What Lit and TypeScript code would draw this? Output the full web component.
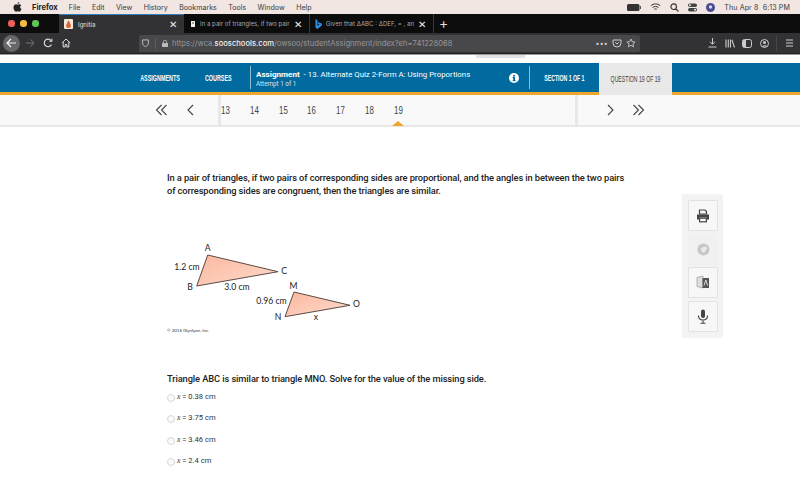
import { LitElement, html, css, svg } from "lit";
import { customElement } from "lit/decorators.js";

const chevL = (n: number) => svg`<svg class="chev" width="14" height="12" viewBox="0 0 14 12" fill="none" stroke="#444" stroke-width="1.1">${n === 2 ? svg`<path d="M6.5 1 1.5 6l5 5M11.5 1 6.5 6l5 5"/>` : svg`<path d="M9 1 4 6l5 5"/>`}</svg>`;
const chevR = (n: number) => svg`<svg class="chev" width="14" height="12" viewBox="0 0 14 12" fill="none" stroke="#444" stroke-width="1.1">${n === 2 ? svg`<path d="M2.5 1l5 5-5 5M7.5 1l5 5-5 5"/>` : svg`<path d="M5 1l5 5-5 5"/>`}</svg>`;

@customElement("app-root")
export class AppRoot extends LitElement {
  static styles = css`
    :host { display: block; width: 800px; height: 500px; overflow: hidden; background: #fff; font-family: "Roboto", "Liberation Sans", sans-serif; color: #222; }
    .menubar { height: 14px; background: #f2e6e3; display: flex; align-items: center; padding: 0 10px 0 13px; font: 7.1px "Inter", "Liberation Sans", sans-serif; color: #3a3a3a; }
    .menubar .apple { width: 9px; height: 10px; margin-right: 10px; }
    .menubar b { margin-right: 11px; font-weight: 700; color: #222; font-size: 7.6px; }
    .menubar .mi { margin-right: 11.4px; }
    .menubar .right { margin-left: auto; display: flex; align-items: center; gap: 9px; }
    .menubar .clock { margin-left: 0; letter-spacing: .1px; }
    .tabs { height: 19px; background: #0c0c0d; display: flex; align-items: stretch; color: #a8a8ab; font: 6.1px "Inter", "Liberation Sans", sans-serif; }
    .lights { width: 59px; display: flex; gap: 5.5px; align-items: center; padding-left: 8px; box-sizing: border-box; }
    .lights i { width: 6.5px; height: 6.5px; border-radius: 50%; }
    .tab { display: flex; align-items: center; box-sizing: border-box; padding: 0 7px 0 5px; gap: 5px; }
    .tab.active { width: 125px; background: #323234; border-top: 1.5px solid #2f7fc0; color: #e0e0e0; }
    .tab.t2 { width: 126px; border-right: 1px solid #38383a; padding-left: 6px; gap: 4px; }
    .tab.t3 { width: 124px; border-right: 1px solid #38383a; padding-left: 5px; gap: 4px; }
    .tab .label { flex: 1; white-space: nowrap; }
    .tab .x { font-size: 10px; color: #eee; line-height: 1; }
    .plus { margin-left: 5px; font-size: 14px; color: #ddd; line-height: 17px; }
    .toolbar { height: 21px; background: #323234; display: flex; align-items: center; color: #c8c8ca; box-sizing: border-box; border-bottom: 1px solid #222; }
    .back { width: 17px; height: 17px; border-radius: 50%; background: #67676a; margin-left: 3px; display: flex; align-items: center; justify-content: center; }
    .nav-ic { display: flex; gap: 8px; align-items: center; margin-left: 5px; }
    .url { margin-left: 68px; width: 501px; height: 17px; background: #48484b; border-radius: 2px; display: flex; align-items: center; padding: 0 4px 0 3px; box-sizing: border-box; font: 7.6px "Inter", "Liberation Sans", sans-serif; color: #97979a; gap: 4px; white-space: nowrap; }
    .url b { color: #f0f0f0; font-weight: 500; }
    .url .path { flex: 1; overflow: hidden; }
    .tools { margin-left: 68px; display: flex; gap: 7.6px; align-items: center; }
    .sep { width: 1px; height: 15px; background: #47474a; }
    .stub-row { height: 9px; background: #fff; border-top: 1px solid #999; box-sizing: border-box; padding-left: 476px; }
    .stub { width: 49px; height: 3px; background: #e2e2e2; }
    .band { background: #016a9f; border-bottom: 3px solid #eca62e; display: flex; align-items: stretch; height: 29px; color: #fff; }
    .cond { font-family: "Liberation Sans", sans-serif; font-weight: 700; text-transform: uppercase; white-space: nowrap; }
    .cond > span { display: inline-block; transform: scaleX(.6); }
    .band .cell { display: flex; align-items: center; justify-content: center; }
    .a1 { margin-left: 128px; width: 64px; font-size: 9px; }
    .a2 { width: 58px; font-size: 9px; padding-right: 5px; box-sizing: border-box; }
    .divider { width: 1px; background: #8fbbd3; margin: 3px 0; }
    .assign { width: 252px; padding: 2px 0 0 5px; box-sizing: content-box; display: flex; flex-direction: column; justify-content: center; gap: 1.5px; }
    .assign .l1 { font-size: 7.85px; white-space: nowrap; }
    .assign .l1 b { font-weight: 700; font-size: 8.1px; }
    .assign .l2 { font-size: 6.3px; color: #d8e8f0; }
    .info { width: 10px; height: 10px; align-self: center; margin: 0 10px 0 1px; }
    .sec { width: 69px; font-size: 8.6px; }
    .band .qn { width: 73px; font-size: 8.6px; background: #e8e8e8; color: #444; margin-bottom: -3px; font-weight: 400; }
    .numbar { height: 30px; background: #f9f9f9; border-bottom: 2px solid #e8e8e8; display: flex; align-items: center; }
    .left { width: 218px; display: flex; justify-content: flex-end; gap: 15px; padding-right: 20px; box-sizing: border-box; }
    .nb { width: 3px; align-self: stretch; background: #e8e8e8; flex: none; }
    .nums { width: 354px; display: flex; font-size: 11px; color: #444; position: relative; align-self: stretch; align-items: center; }
    .nums .n { width: 28.8px; text-align: center; font-weight: 400; flex: none; transform: scaleX(.72); }
    .nums .n:first-child { margin-left: -10px; }
    .caret { position: absolute; left: 171px; bottom: -1px; width: 0; height: 0; border-left: 6px solid transparent; border-right: 6px solid transparent; border-bottom: 5px solid #eca62e; }
    .rgt { display: flex; gap: 14px; padding-left: 25px; }
    .main { display: flex; padding-left: 167px; }
    .content { width: 515px; padding-top: 44px; }
    .q { font-size: 9.3px; letter-spacing: -0.1px; line-height: 13.4px; font-weight: 500; color: #222; width: 466px; }
    .fig { display: block; margin-top: 43px; margin-left: -7px; }
    .stem { font-size: 9.3px; letter-spacing: -0.1px; font-weight: 500; margin-top: 36px; line-height: 13px; color: #222; }
    .opts { margin-top: 1px; display: flex; flex-direction: column; }
    .opt { height: 21.3px; display: flex; align-items: center; font-size: 7.6px; color: #333; gap: 2px; }
    .radio { width: 6px; height: 6px; border: 1px solid #d8d8d8; border-radius: 50%; background: #fafafa; margin-top: 3px; }
    .opt i { font-family: "Liberation Serif", serif; }
    .side { margin-top: 67px; width: 41px; height: 144px; background: #f3f3f3; padding: 6px; box-sizing: border-box; border-radius: 2px; display: flex; flex-direction: column; gap: 2.5px; }
    .btn { width: 30px; height: 31px; box-sizing: border-box; border: 1px solid #e2e2e2; background: #f7f7f7; display: flex; align-items: center; justify-content: center; border-radius: 1px; flex: none; }
    .btn.off { background: #f1f1f1; border-color: #f0f0f0; }
    .lbl { font: 8.6px "Lato", "Liberation Sans", sans-serif; fill: #222; text-anchor: middle; dominant-baseline: middle; }
    .copy { font: 4.4px "Lato", "Liberation Sans", sans-serif; fill: #333; }
  `;

  render() {
    return html`
      <div class="menubar">
        <svg class="apple" viewBox="0 0 20 22"><path fill="#222" d="M14 0c.2 2-1.700 4.300-4 4.200C9.800 2.200 11.800.2 14 0zM10 5.800c1.300 0 2.300-.9 4.200-.9 1.600 0 3.100.8 4 2.200-3.500 2.100-2.900 6.800.8 8.300-.9 2.300-3 6-5 6-1.500 0-2-1-3.700-1s-2.300 1-3.700 1C4 21.400 1 16 1 12c0-4 2.600-7 5.700-7 1.500 0 2.500.8 3.300.8z"/></svg>
        <b>Firefox</b><span class="mi">File</span><span class="mi">Edit</span><span class="mi">View</span><span class="mi">History</span><span class="mi">Bookmarks</span><span class="mi">Tools</span><span class="mi">Window</span><span class="mi">Help</span>
        <div class="right">
          <svg width="14" height="7" viewBox="0 0 14 7"><rect width="12.500" height="7" rx="1.500" fill="#333"/><rect x="13" y="2" width="1" height="3" fill="#555"/></svg>
          <svg width="11" height="8" viewBox="0 0 11 8" fill="none" stroke="#333" stroke-width="1"><path d="M.8 2.800c2.700-2.500 6.700-2.500 9.400 0M2.500 4.600c1.800-1.500 4.200-1.500 6 0M4.200 6.300c.8-.6 1.800-.6 2.600 0"/></svg>
          <svg width="9" height="9" viewBox="0 0 9 9" fill="none" stroke="#333" stroke-width="1.100"><circle cx="3.700" cy="3.700" r="2.800"/><path d="M5.800 5.800 8.500 8.500"/></svg>
          <svg width="9" height="9" viewBox="0 0 9 9"><rect y="0.500" width="9" height="3.500" rx="1.700" fill="#444"/><rect y="5" width="9" height="3.500" rx="1.700" fill="#444"/><circle cx="2" cy="2.200" r="1" fill="#eee"/><circle cx="7" cy="6.800" r="1" fill="#eee"/></svg>
          <svg width="9" height="9" viewBox="0 0 9 9"><circle cx="4.500" cy="4.500" r="4.500" fill="#4a4a90"/><circle cx="4.500" cy="4" r="1.700" fill="#d8d8f0"/></svg>
          <span class="clock">Thu Apr 8&nbsp; 6:13 PM</span>
        </div>
      </div>

      <div class="tabs">
        <div class="lights"><i style="background:#ec5f57"></i><i style="background:#f4bd3f"></i><i style="background:#5fc553"></i></div>
        <div class="tab active">
          <svg width="9" height="10" viewBox="0 0 9 10"><rect width="9" height="10" rx="1" fill="#f3ead9"/><path d="M4.500 1 7 6.500a2.500 2.500 0 0 1-5 0z" fill="#d8663a"/></svg>
          <span class="label">Ignitia</span><span class="x">✕</span>
        </div>
        <div class="tab t2">
          <svg width="6" height="6" viewBox="0 0 6 6"><path d="M1 0h4v6H1z" fill="#eee"/><path d="M2 2h2" stroke="#111" stroke-width=".7"/></svg>
          <span class="label">In a pair of triangles, if two pair</span><span class="x">✕</span>
        </div>
        <div class="tab t3">
          <svg width="7" height="10" viewBox="0 0 7 10"><path d="M.5 0 2.500.8v6l2.200-1.200-1.300-.7-.8-2L7 4.500v2.100L2.500 10 .5 8.600z" fill="#2f8fe0"/></svg>
          <span class="label">Given that ΔABC : ΔDEF, = , an</span><span class="x">✕</span>
        </div>
        <span class="plus">+</span>
      </div>

      <div class="toolbar">
        <div class="back"><svg width="11" height="10" viewBox="0 0 11 10" fill="none" stroke="#eee" stroke-width="1.200"><path d="M10 5H1.500M5 1 1 5l4 4"/></svg></div>
        <div class="nav-ic">
          <svg width="10" height="10" viewBox="0 0 11 10" fill="none" stroke="#77777a" stroke-width="1.100"><path d="M1 5h8.500M6 1l4 4-4 4"/></svg>
          <svg width="10" height="10" viewBox="0 0 10 10" fill="none" stroke="#ddd" stroke-width="1.100"><path d="M8.500 6.500A3.800 3.800 0 1 1 8 2.500M8.800.8v2.500H6.300"/></svg>
          <svg width="10" height="10" viewBox="0 0 10 10" fill="none" stroke="#ddd" stroke-width="1"><path d="M.8 5 5 1l4.200 4M2.200 4.200V9h2V6.500h1.600V9h2V4.200"/></svg>
        </div>
        <div class="url">
          <svg width="7" height="8" viewBox="0 0 7 8" fill="none" stroke="#bbb" stroke-width="1"><path d="M.6.900h5.800v3C6.400 6 5 7 3.500 7.500 2 7 .6 6 .6 3.900z"/></svg>
          <span style="width:1px;height:11px;background:#5f5f62;margin:0 2px"></span>
          <svg width="6" height="7" viewBox="0 0 6 7"><rect y="3" width="6" height="4" rx=".5" fill="#bbb"/><path d="M1.300 3V2a1.700 1.700 0 0 1 3.400 0v1" fill="none" stroke="#bbb" stroke-width=".8"/></svg>
          <span class="path">https://wca.<b>sooschools.com</b>/owsoo/studentAssignment/index?eh=741228068</span>
          <span style="font-size:7px;color:#ccc;letter-spacing:.2px">•••</span>
          <svg width="10" height="9" viewBox="0 0 10 9" fill="none" stroke="#ccc" stroke-width="1"><path d="M1 1h8v3a4 4 0 0 1-8 0z"/><path d="M3.200 3.400 5 5l1.800-1.600"/></svg>
          <svg width="10" height="10" viewBox="0 0 10 10" fill="none" stroke="#ccc" stroke-width=".9"><path d="M5 1l1.200 2.700 2.900.3-2.200 1.900.7 2.900L5 7.300 2.400 8.800l.7-2.900L.9 4l2.900-.3z"/></svg>
        </div>
        <div class="tools">
          <svg width="9" height="10" viewBox="0 0 9 10" fill="none" stroke="#ccc" stroke-width="1"><path d="M4.500 0v6M2 3.800l2.500 2.500L7 3.800M.5 9h8"/></svg>
          <svg width="10" height="9" viewBox="0 0 10 9" fill="none" stroke="#ccc" stroke-width="1.100"><path d="M1 .5v8M3.300.5v8M5.500.5v8M7 .8 9.500 8.500"/></svg>
          <svg width="10" height="9" viewBox="0 0 10 9"><rect x=".5" y=".5" width="9" height="8" rx="2" fill="none" stroke="#ccc"/><rect x="1" y="1" width="3" height="7" fill="#ccc"/></svg>
          <svg width="9" height="9" viewBox="0 0 9 9"><circle cx="4.500" cy="4.500" r="4" fill="none" stroke="#ccc"/><circle cx="4.500" cy="3.500" r="1.500" fill="#ccc"/><path d="M1.800 7.500a3 2.200 0 0 1 5.400 0z" fill="#ccc"/></svg>
          <span class="sep"></span>
          <svg width="9" height="8" viewBox="0 0 9 8" stroke="#ccc" stroke-width="1"><path d="M1 1h7M1 4h7M1 7h7"/></svg>
        </div>
      </div>

      <div class="stub-row"><div class="stub"></div></div>

      <div class="band">
        <div class="cell cond a1"><span>Assignments</span></div>
        <div class="cell cond a2"><span>Courses</span></div>
        <div class="divider"></div>
        <div class="assign">
          <div class="l1"><b>Assignment</b> &nbsp;- 13. Alternate Quiz 2-Form A: Using Proportions</div>
          <div class="l2">Attempt 1 of 1</div>
        </div>
        <svg class="info" viewBox="0 0 10 10"><circle cx="5" cy="5" r="5" fill="#fff"/><rect x="4.200" y="4.200" width="1.800" height="3.800" fill="#016a9f"/><rect x="3.500" y="4.200" width="2" height=".8" fill="#016a9f"/><rect x="3.500" y="7.400" width="3.200" height=".8" fill="#016a9f"/><circle cx="5" cy="2.800" r="1" fill="#016a9f"/></svg>
        <div class="divider"></div>
        <div class="cell cond sec"><span>Section 1 of 1</span></div>
        <div class="cell cond qn"><span>Question 19 of 19</span></div>
      </div>

      <div class="numbar">
        <div class="left">${chevL(2)}${chevL(1)}</div>
        <div class="nb"></div>
        <div class="nums cond">
          ${[13, 14, 15, 16, 17, 18, 19].map((n) => html`<div class="n">${n}</div>`)}
          <div class="caret"></div>
        </div>
        <div class="nb"></div>
        <div class="rgt">${chevR(1)}${chevR(2)}</div>
      </div>

      <div class="main">
        <div class="content">
          <div class="q">In a pair of triangles, if two pairs of corresponding sides are proportional, and the angles in between the two pairs of corresponding sides are congruent, then the triangles are similar.</div>
          <svg class="fig" width="220" height="95" viewBox="160 240 220 95">
            <defs><linearGradient id="g" x1="0" y1="0" x2="1" y2="1"><stop offset="0" stop-color="#fbb79e"/><stop offset="1" stop-color="#fedccd"/></linearGradient></defs>
            <path d="M207.700 254 278 270.700 196.700 285z" fill="url(#g)" stroke="#5a4a44" stroke-width="1"/>
            <path d="M294 291 350 304.300 285 315.700z" fill="url(#g)" stroke="#5a4a44" stroke-width="1"/>
            <text class="lbl" x="207.700" y="248">A</text>
            <text class="lbl" x="187" y="266.500">1.2 cm</text>
            <text class="lbl" x="190" y="287">B</text>
            <text class="lbl" x="284" y="271">C</text>
            <text class="lbl" x="237" y="287">3.0 cm</text>
            <text class="lbl" x="293.500" y="285.500">M</text>
            <text class="lbl" x="271.500" y="300.500">0.96 cm</text>
            <text class="lbl" x="278" y="317">N</text>
            <text class="lbl" x="356.500" y="304">O</text>
            <text class="lbl" x="316" y="317">x</text>
            <text class="copy" x="167" y="331">© 2016 Glynlyon, Inc.</text>
          </svg>
          <div class="stem">Triangle ABC is similar to triangle MNO. Solve for the value of the missing side.</div>
          <div class="opts">
            ${["0.38", "3.75", "3.46", "2.4"].map((v) => html`<div class="opt"><span class="radio"></span><span><i>x</i> = ${v} cm</span></div>`)}
          </div>
        </div>
        <div class="side">
          <div class="btn"><svg width="14" height="14" viewBox="0 0 14 14"><path d="M3.500 1h5.500l1.500 1.500V5h-7z" fill="none" stroke="#444" stroke-width="1.200"/><path d="M1 5.500h12v5h-2V8.500H3v2H1z" fill="#444"/><rect x="3.600" y="9.200" width="6.800" height="3.600" fill="none" stroke="#444" stroke-width="1.200"/></svg></div>
          <div class="btn off"><svg width="13" height="13" viewBox="0 0 13 13"><circle cx="6.500" cy="6.500" r="6" fill="#c6c6c6"/><path d="M3.500 5.500 7 3.500l3.500 1L8 9 5.500 10z" fill="#e8e8e8"/></svg></div>
          <div class="btn"><svg width="14" height="15" viewBox="0 0 14 15"><path d="M1 2.500 7 1v12l-6-1.500z" fill="#ddd" stroke="#999" stroke-width=".7"/><path d="M6.500 3h6.500v10H6.500z" fill="#555"/><path d="M8 10.500 9.800 5l1.800 5.500" fill="none" stroke="#eee" stroke-width=".9"/></svg></div>
          <div class="btn"><svg width="12" height="15" viewBox="0 0 12 15"><rect x="4" y=".5" width="4" height="8.500" rx="2" fill="#444"/><path d="M1.500 6.500c0 6 9 6 9 0" fill="none" stroke="#444" stroke-width="1.100"/><path d="M6 11.500V14M3.500 14.300h5" stroke="#444" stroke-width="1.100"/></svg></div>
        </div>
      </div>
    `;
  }
}
